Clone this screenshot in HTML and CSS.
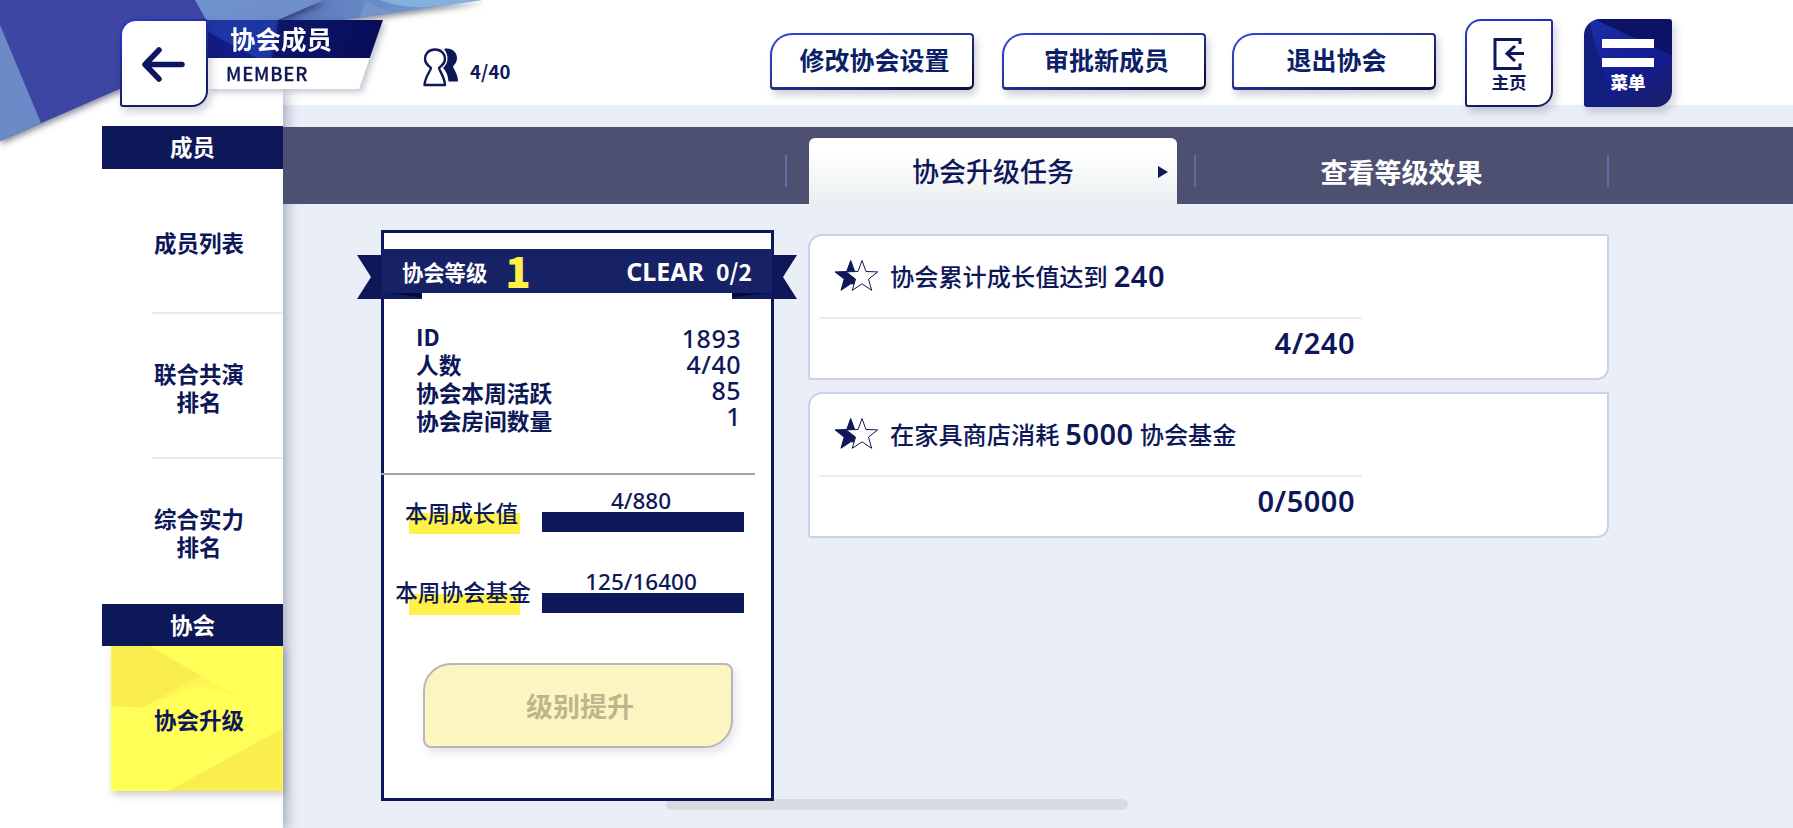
FILE: index.html
```html
<!DOCTYPE html>
<html lang="zh-CN">
<head>
  <meta charset="UTF-8" />
  <meta name="viewport" content="width=device-width, initial-scale=1.0"/>
  <title>协会成员</title>
  <link rel="stylesheet" href="styles.css">
</head>
<body>

<!-- folded paper in the corner -->
<svg class="corner-art" width="500" height="160" viewBox="0 0 500 160">
  <defs>
    <linearGradient id="paperLight" x1="0" y1="0" x2="1" y2="1">
      <stop offset="0" stop-color="#6e93cf"/>
      <stop offset="1" stop-color="#7288c6"/>
    </linearGradient>
    <linearGradient id="paperBand" x1="0" y1="0" x2="1" y2="0">
      <stop offset="0" stop-color="#5069b4"/>
      <stop offset="0.5" stop-color="#6788c6"/>
      <stop offset="1" stop-color="#7fa9d8"/>
    </linearGradient>
  </defs>
  <g class="paper">
    <path d="M250 0H482L280 29Z" fill="url(#paperBand)"/>
    <path d="M366 0L360 17L395 12Q375 8 366 0Z" fill="#7396ce"/>
    <path d="M380 0Q405 10 440 6L482 0Z" fill="#83b0dc"/>
  </g>
  <g class="paper">
    <path d="M0 0H324L0 141Z" fill="#3d46a2"/>
    <path d="M195 0H324L220 45Z" fill="url(#paperLight)"/>
    <path d="M0 25L41 123L0 141Z" fill="#6d8ac8"/>
  </g>
</svg>

<header>
  <button class="back-btn">
    <svg width="46" height="36" viewBox="0 0 46 36">
      <path d="M18 4L4 18.500L18 33M5 18.500H41" fill="none" stroke="#0d1660" stroke-width="5.5" stroke-linecap="round" stroke-linejoin="round"/>
    </svg>
  </button>
  <div class="title-shadow">
    <div class="title-plate">
      <h1>协会成员</h1>
      <span class="subtitle">MEMBER</span>
    </div>
  </div>
  <div class="member-count">
    <svg width="36" height="40" viewBox="0 0 36 40">
      <path d="M21 2C28 0 34.500 5 34 12C33.500 16 31 18 30 19.500C31 23 35 27 35 34.500H25.500C25 28 23 24 20 21C25 17 26.500 9 21 2Z" fill="#0e1858"/>
      <path d="M12 2.500C5.500 2.500 2 7 2 12C2 16 4.500 18 8 21C7 25 2 30 1.500 38H22C21.500 30 17 25 16 21C19.500 18 22 16 22 12C22 7 18.500 2.500 12 2.500Z" fill="#fff" stroke="#0e1858" stroke-width="2.400" stroke-linejoin="round"/>
    </svg>
    <span>4/40</span>
  </div>
  <nav class="actions">
    <button class="action-btn">修改协会设置</button>
    <button class="action-btn">审批新成员</button>
    <button class="action-btn">退出协会</button>
  </nav>
  <button class="square-btn home-btn">
    <svg width="34" height="34" viewBox="0 0 34 34">
      <path d="M28 7V2.500H3V31.500H28V26.500" fill="none" stroke="#0e1858" stroke-width="3"/>
      <path d="M32 16.500H15.500M23 9L15 16.500L23 24" fill="none" stroke="#0e1858" stroke-width="3"/>
    </svg>
    <span>主页</span>
  </button>
  <button class="square-btn menu-btn">
    <i></i>
    <i></i>
    <span>菜单</span>
  </button>
</header>

<div class="layout">

  <aside>
    <h2>成员</h2>
    <a class="side-item">成员列表</a>
    <a class="side-item">联合共演<br>排名</a>
    <a class="side-item last">综合实力<br>排名</a>
    <h2>协会</h2>
    <a class="side-item active">
      <svg class="facets" width="172" height="146" viewBox="0 0 172 146">
        <path d="M0 0H38L90 30Q60 50 30 62L0 61Z" fill="#faed4e"/>
        <path d="M90 30L128 50L88 40L30 62Z" fill="#fdf653"/>
        <path d="M57 146L172 83V146Z" fill="#faed4e"/>
      </svg>
      <span>协会升级</span>
    </a>
  </aside>

  <main>
    <div class="tabs">
      <div class="tab active">协会升级任务
        <svg class="tab-arrow" width="10" height="12" viewBox="0 0 10 12"><path d="M0 0L10 6L0 12Z" fill="#0e1858"/></svg>
      </div>
      <div class="tab">查看等级效果</div>
    </div>

    <div class="content">
      <section class="level-card">
        <div class="ribbon">
          <svg class="ribbon-art" width="440" height="50" viewBox="0 0 440 50">
            <path d="M0 6H26V50H0L14 28Z" fill="#0e1858"/>
            <path d="M440 6H414V50H440L426 28Z" fill="#0e1858"/>
            <path d="M25 44H65V50H25Z" fill="#101b60"/>
            <path d="M32 44H65V48.500Z" fill="#050b38"/>
            <path d="M415 44H375V50H415Z" fill="#101b60"/>
            <path d="M408 44H375V48.500Z" fill="#050b38"/>
            <path d="M25 0H415V44H25Z" fill="#172266"/>
          </svg>
          <span class="ribbon-label">协会等级</span>
          <span class="level">1</span>
          <span class="clear">CLEAR</span>
          <span class="clear-count">0/2</span>
        </div>

        <div class="stats">
          <div class="stat-names">
            <span>ID</span>
            <span>人数</span>
            <span>协会本周活跃</span>
            <span>协会房间数量</span>
          </div>
          <div class="stat-values">
            <span>1893</span>
            <span>4/40</span>
            <span>85</span>
            <span>1</span>
          </div>
        </div>

        <div class="week-row">
          <span class="week-label">本周成长值</span>
          <div class="meter">
            <span>4/880</span>
            <div class="bar"></div>
          </div>
        </div>
        <div class="week-row fund">
          <span class="week-label">本周协会基金</span>
          <div class="meter">
            <span>125/16400</span>
            <div class="bar"></div>
          </div>
        </div>

        <button class="upgrade-btn" disabled>级别提升</button>
      </section>

      <section class="tasks">
        <article class="task">
          <div class="task-title">
            <svg width="47" height="34" viewBox="0 0 47 34">
              <path d="M18.700 1.500L22.700 12.500L30 13L24 25L18.700 24.800L9 31.300L12.200 20.100L3 12.900L14.700 12.500Z" fill="#0e1858" stroke="#0e1858"/>
              <path d="M30 1.500L34 12.500L45.700 12.900L36.500 20.100L39.700 31.300L30 24.800L20.300 31.300L23.500 20.100L14.300 12.900L26 12.500Z" fill="#fff" stroke="#0e1858"/>
            </svg>
            <span>协会累计成长值达到</span><b>240</b>
          </div>
          <div class="task-progress">4/240</div>
        </article>
        <article class="task">
          <div class="task-title">
            <svg width="47" height="34" viewBox="0 0 47 34">
              <path d="M18.700 1.500L22.700 12.500L30 13L24 25L18.700 24.800L9 31.300L12.200 20.100L3 12.900L14.700 12.500Z" fill="#0e1858" stroke="#0e1858"/>
              <path d="M30 1.500L34 12.500L45.700 12.900L36.500 20.100L39.700 31.300L30 24.800L20.300 31.300L23.500 20.100L14.300 12.900L26 12.500Z" fill="#fff" stroke="#0e1858"/>
            </svg>
            <span>在家具商店消耗</span><b>5000</b><span>协会基金</span>
          </div>
          <div class="task-progress">0/5000</div>
        </article>
      </section>
    </div>
  </main>

</div>

<div class="home-indicator"></div>

</body>
</html>
```
FILE: styles.css
```css
* {
  box-sizing: border-box;
}
body {
  font-family: "Noto Sans CJK SC", sans-serif;
  background: #fff;
  color: #0e1858;
  margin: 0;
  height: 828px;
  overflow: hidden;
  position: relative;
}
button {
  font-family: inherit;
  color: inherit;
  padding: 0;
  margin: 0;
}
.corner-art {
  position: absolute;
  top: 0;
  left: 0;
}
.paper {
  filter: drop-shadow(1px 3px 3px rgba(10,15,50,0.5));
}

/* header */
header {
  position: relative;
  z-index: 3;
  height: 105px;
  padding: 19px 0 0 120px;
  display: flex;
  align-items: flex-start;
}
.back-btn, .square-btn {
  width: 88px;
  height: 88px;
  flex: none;
  border: 2px solid transparent;
  border-radius: 16px 3px 16px 3px;
  background: linear-gradient(#fff, #fff) padding-box, linear-gradient(160deg, #2a38d8, #141d62 75%) border-box;
  box-shadow: 3px 5px 8px rgba(20,25,70,0.2);
  display: flex;
  flex-direction: column;
  align-items: center;
}
.back-btn {
  justify-content: center;
  position: relative;
  z-index: 1;
}
.back-btn svg {
  margin-top: 1px;
}
.title-shadow {
  margin-top: 1px;
  margin-left: -1px;
  filter: drop-shadow(3px 3px 3px rgba(20,25,70,0.25));
}
.title-plate {
  width: 176px;
  height: 69px;
  background: #fff;
  clip-path: polygon(0 0, 100% 0, 152px 100%, 0 100%);
}
h1 {
  margin: 0;
  height: 38px;
  padding-left: 23px;
  font-size: 25.500px;
  line-height: 36px;
  color: #fff;
  background: linear-gradient(28deg, #111c84 20%, transparent 20.5%), linear-gradient(100deg, #1d36a4 38%, #0e1668 40%, #070c58);
}
.subtitle {
  display: block;
  padding-left: 19px;
  font-size: 18.500px;
  line-height: 31px;
  font-weight: 500;
  letter-spacing: 0.8px;
  -webkit-text-stroke: 0.3px #0e1858;
}
.member-count {
  display: flex;
  align-items: flex-start;
  margin: 28px 0 0 40px;
  width: 347px;
  font-size: 18.500px;
  font-weight: 600;
}
.member-count span {
  margin: 10px 0 0 11px;
  line-height: 28px;
  letter-spacing: 0.2px;
}
.actions {
  display: flex;
  margin-top: 14px;
}
.action-btn {
  width: 204px;
  height: 57px;
  margin-right: 26px;
  border: 2px solid transparent;
  border-bottom-width: 3px;
  border-radius: 22px 4px 6px 4px;
  background: linear-gradient(#fff, #fff) padding-box, linear-gradient(165deg, #2f42e0, #2c3a9c 40%, #0c1040 85%) border-box;
  box-shadow: 3px 5px 7px rgba(20,25,70,0.2);
  color: #0c1f68;
  font-size: 25px;
  font-weight: 700;
  line-height: 46px;
  padding: 0 0 4px 5px;
}
.action-btn:first-child {
  margin-right: 28px;
}
.home-btn {
  margin-left: 3px;
  padding-top: 16px;
}
.square-btn span {
  font-size: 17.500px;
  font-weight: 700;
  line-height: 24px;
}
.menu-btn {
  margin-left: 31px;
  padding-top: 18px;
  color: #fff;
  background:
    linear-gradient(75deg, #111e7e 25%, transparent 25.5%),
    linear-gradient(205deg, #0c1366 28%, transparent 28.5%),
    linear-gradient(150deg, #1c2eae, #141c8c 60%, #1a2066);
  background-origin: border-box;
}
.menu-btn i {
  width: 52px;
  height: 9px;
  flex: none;
  background: #fff;
  margin-bottom: 10px;
}
.menu-btn span {
  font-weight: 900;
  margin-top: -7px;
}
.home-btn span {
  margin-top: -1px;
}

/* sidebar */
.layout {
  display: flex;
}
aside {
  position: relative;
  z-index: 1;
  width: 283px;
  height: 739px;
  flex: none;
  margin-top: -16px;
  padding: 37px 0 0 102px;
  box-shadow: 2px 3px 14px rgba(40,50,90,0.45);
  clip-path: inset(0 -30px 0 0);
}
h2 {
  margin: 0;
  height: 42.500px;
  background: #0e1858;
  color: #fff;
  font-size: 22.500px;
  line-height: 41px;
  text-align: center;
}
.side-item {
  height: 145px;
  margin-left: 50px;
  padding: 3px 0 0 2px;
  display: flex;
  align-items: center;
  font-size: 22.500px;
  line-height: 28px;
  font-weight: 600;
  text-align: center;
  border-bottom: 2px solid #ebebeb;
}
.side-item.last {
  border-bottom: none;
  padding-top: 1px;
}
.side-item.active {
  position: relative;
  margin-left: 9px;
  padding: 0 0 0 43px;
  height: 145px;
  border: none;
  background: #ffff58;
  box-shadow: 2px 4px 7px rgba(60,60,60,0.25);
}
.side-item.active span {
  position: relative;
}
.facets {
  position: absolute;
  left: 0;
  top: 0;
  height: 100%;
}

/* tabs */
main {
  flex: 1;
  height: 723px;
  padding-top: 22px;
  background: #eaeff7;
}
.tabs {
  position: relative;
  z-index: 2;
  height: 77px;
  padding-left: 502px;
  display: flex;
  align-items: flex-end;
  background: #4e5072;
}
.tabs::before {
  content: "";
  width: 2px;
  height: 32px;
  margin: 0 22px 17px 0;
  background: #646ca4;
}
.tab {
  display: flex;
  align-items: center;
  justify-content: center;
  width: 415px;
  height: 32px;
  margin: 0 0 17px 17px;
  border-left: 2px solid #646ca4;
  border-right: 2px solid #646ca4;
  color: #fff;
  font-size: 27px;
  font-weight: 700;
}
.tab.active {
  position: relative;
  width: 368px;
  height: 69px;
  margin: 0 0 -3px;
  padding-bottom: 4px;
  border: none;
  border-radius: 6px 6px 0 0;
  background: linear-gradient(#fff 20%, #eaeeef);
  color: #0e1858;
  font-weight: 500;
}
.tab-arrow {
  position: absolute;
  right: 9px;
  top: 28px;
}

/* level card */
.content {
  display: flex;
  align-items: flex-start;
  padding: 26px 0 0 98px;
}
.level-card {
  position: relative;
  z-index: 2;
  width: 393px;
  height: 571px;
  padding-top: 16px;
  background: #fff;
  border: 3px solid #0e1858;
}
.ribbon {
  position: relative;
  height: 44px;
  display: flex;
  align-items: center;
  padding: 0 19px 0 18px;
  color: #fff;
  font-weight: 700;
}
.ribbon span {
  position: relative;
  white-space: nowrap;
}
.ribbon-art {
  position: absolute;
  left: -27px;
  top: 0;
}
.ribbon-label {
  font-size: 21.300px;
  line-height: 40px;
  padding-top: 1px;
}
.level {
  font-size: 42px;
  font-weight: 900;
  line-height: 44px;
  color: #fff04a;
  margin: -3px 0 0 18px;
}
.clear {
  font-family: "Noto Sans", sans-serif;
  font-size: 25px;
  margin-left: auto;
}
.clear-count {
  font-size: 23px;
  line-height: 40px;
  margin-left: 12px;
}
.stats {
  height: 182px;
  margin: 0 16px 0 -3px;
  padding: 30px 14px 0 35px;
  display: flex;
  justify-content: space-between;
  border-bottom: 2px solid #a3a5a8;
}
.stat-names, .stat-values {
  display: flex;
  flex-direction: column;
}
.stat-names {
  font-size: 22.700px;
  line-height: 28px;
  font-weight: 700;
}
.stat-values {
  margin-top: 2px;
  font-family: "Noto Sans", sans-serif;
  font-size: 25px;
  line-height: 26px;
  font-weight: 500;
  letter-spacing: 0.5px;
  text-align: right;
}
.week-row {
  display: flex;
  align-items: flex-start;
  height: 81px;
  padding: 13px 0 0 25px;
}
.week-label {
  display: flex;
  justify-content: center;
  width: 111px;
  height: 46px;
  padding: 11px 6px 0 0;
  font-size: 22.600px;
  line-height: 28px;
  font-weight: 500;
  white-space: nowrap;
  background: linear-gradient(#fff04a, #fff04a) 0 100% / 100% 21px no-repeat;
}
.fund .week-label {
  padding: 9px 3px 0 0;
}
.meter {
  width: 202px;
  margin-left: 22px;
  text-align: center;
  font-family: "Noto Sans", sans-serif;
  font-size: 22.500px;
  line-height: 25px;
  font-weight: 500;
}
.meter span {
  display: block;
  height: 24px;
  padding-right: 4px;
}
.bar {
  height: 20px;
  background: #0e1858;
}
.upgrade-btn {
  display: block;
  width: 310px;
  height: 85px;
  margin: 26px 0 0 39px;
  padding-left: 4px;
  border: 2px solid #b9b6b8;
  border-radius: 28px 8px 28px 8px;
  background: #fcf5c1;
  box-shadow: 3px 5px 8px rgba(30,30,90,0.12);
  color: #beb58b;
  font-size: 27px;
  font-weight: 600;
}

/* tasks */
.tasks {
  margin: 4px 0 0 34px;
}
.task {
  width: 801px;
  height: 146px;
  margin-bottom: 12px;
  background: #fff;
  border: 2px solid #cdd0e8;
  border-radius: 14px 2px 12px 3px;
}
.task-title {
  display: flex;
  align-items: center;
  width: 543px;
  height: 83px;
  margin-left: 9px;
  padding: 0 0 3px 13px;
  border-bottom: 2px solid #ebeef0;
  font-size: 24.200px;
  font-weight: 500;
}
.task-title svg {
  margin: 2px 11px 0 0;
}
.task-title b {
  margin: 0 6px;
}
.task-title b, .task-progress {
  font-family: "Noto Sans", sans-serif;
  font-size: 29px;
  font-weight: 600;
  letter-spacing: 0.5px;
}
.task-progress {
  width: 545px;
  line-height: 48px;
  text-align: right;
}

.home-indicator {
  position: absolute;
  z-index: 1;
  left: 666px;
  top: 799px;
  width: 462px;
  height: 11px;
  border-radius: 6px;
  background: #d8dce0;
}
```
